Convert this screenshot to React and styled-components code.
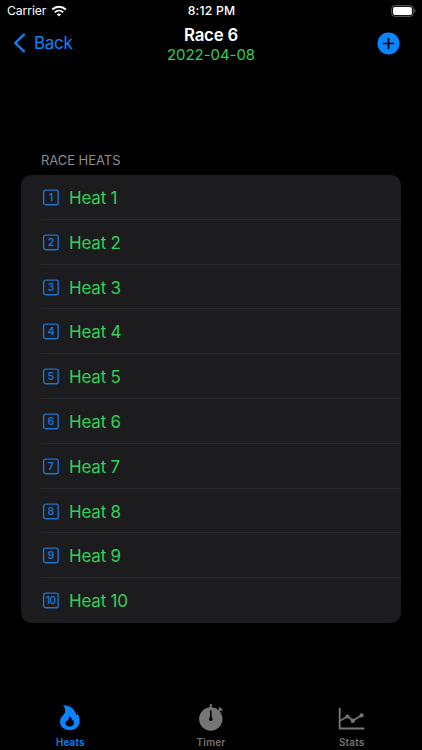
import React, { useState } from "react";
import styled, { createGlobalStyle, ThemeProvider } from "styled-components";

const theme = {
   color: {
      blue: "#0a84ff",
      badge: "#1b73cf",
      green: "#30d158",
      gray: "#8d8d93",
      tabGray: "#757575",
      card: "#1c1c1e",
      line: "#29292c",
   },
};

const GlobalStyle = createGlobalStyle`
   * {
      box-sizing: border-box;
   }

   body {
      margin: 0;
      background-color: #000;
      color: #fff;
      font-family: Inter, "Liberation Sans", sans-serif;
   }
`;

const Screen = styled.div`
   display: flex;
   flex-direction: column;
   width: 422px;
   height: 750px;
   overflow: hidden;
`;

const StatusBar = styled.div`
   display: grid;
   grid-template-columns: 1fr auto 1fr;
   align-items: center;
   height: 22px;
   padding: 0 6px 0 7px;
   font-size: 12.2px;
   line-height: 22px;
`;

const Carrier = styled.div`
   display: flex;
   align-items: center;
   gap: 5px;
   letter-spacing: -0.1px;
`;

const Time = styled.div`
   font-weight: 500;
   letter-spacing: 0.2px;
`;

const BatterySlot = styled.div`
   display: flex;
   justify-content: flex-end;
`;

const NavBar = styled.div`
   display: grid;
   grid-template-columns: 1fr auto 1fr;
   align-items: center;
   height: 43px;
   padding: 0 22px 0 13px;
`;

const BackButton = styled.button`
   display: flex;
   align-items: center;
   gap: 8px;
   padding: 0 0 2px;
   border: none;
   background: none;
   color: ${({ theme }) => theme.color.blue};
   font-family: inherit;
   font-size: 17px;
   letter-spacing: -0.3px;
`;

const Heading = styled.div`
   display: flex;
   flex-direction: column;
   align-items: center;
   padding: 1px 0 0 9px;
`;

const Title = styled.h1`
   margin: 0;
   font-size: 16.8px;
   font-weight: 600;
   line-height: 20px;
   letter-spacing: -0.2px;
`;

const RaceDate = styled.div`
   color: ${({ theme }) => theme.color.green};
   font-size: 15px;
   line-height: 19px;
   letter-spacing: -0.05px;
`;

const AddButton = styled.button`
   display: flex;
   justify-self: end;
   padding: 0;
   border: none;
   background: none;
   color: ${({ theme }) => theme.color.blue};
`;

const Content = styled.main`
   flex: 1;
   padding: 86px 21px 0;
`;

const SectionTitle = styled.h2`
   margin: 0 0 6px;
   padding-left: 20px;
   color: ${({ theme }) => theme.color.gray};
   font-size: 13px;
   font-weight: 400;
   line-height: 18px;
   letter-spacing: -0.05px;
`;

const HeatList = styled.ul`
   margin: 0;
   padding: 0 0 0 20px;
   width: 380px;
   border-radius: 10px;
   background-color: ${({ theme }) => theme.color.card};
   list-style: none;
   overflow: hidden;
`;

const HeatRow = styled.li`
   display: flex;
   align-items: center;
   gap: 9px;
   height: 44.8px;
   padding: 2.2px 0 0 1px;
   border-bottom: 1px solid ${({ theme }) => theme.color.line};

   &:last-child {
      border-bottom-color: transparent;
   }
`;

const NumberIcon = styled.svg`
   width: 18px;
   height: 18px;
   color: ${({ theme }) => theme.color.badge};
   font-size: ${({ $wide }) => ($wide ? "10px" : "10.5px")};
   font-weight: 600;
   letter-spacing: ${({ $wide }) => ($wide ? "-0.6px" : "0")};
`;

const HeatName = styled.span`
   color: ${({ theme }) => theme.color.green};
   font-size: 17px;
   line-height: 22px;
   letter-spacing: -0.2px;
`;

const TabBar = styled.nav`
   display: grid;
   grid-template-columns: repeat(3, 1fr);
   height: 48px;
`;

const Tab = styled.button`
   display: flex;
   flex-direction: column;
   align-items: center;
   padding: 0;
   border: none;
   background: none;
   color: ${({ theme, $active }) =>
      $active ? theme.color.blue : theme.color.tabGray};
   font-family: inherit;
   font-size: 9.8px;
   font-weight: 600;
   line-height: 12px;
   letter-spacing: 0.25px;
`;

const TabIcon = styled.svg`
   width: 30px;
   height: 32px;
   margin-bottom: 3px;
`;

const WifiIcon = () => (
   <svg width="16" height="12" viewBox="0 0 16 12" fill="none">
      <path d="M1.2 4.5C5.1.8 10.9.8 14.8 4.5" stroke="#fff" strokeWidth="2" />
      <path d="M3.8 7.3c2.5-2.3 5.9-2.3 8.4 0" stroke="#fff" strokeWidth="1.9" />
      <path d="M5.7 9.3c1.4-1.2 3.2-1.2 4.6 0L8 11.6z" fill="#fff" />
   </svg>
);

const BatteryIcon = () => (
   <svg width="25" height="12" viewBox="0 0 25 12">
      <rect x=".7" y=".7" width="21.6" height="10.6" rx="3" fill="none" stroke="#666" />
      <rect x="2.1" y="2.1" width="18.8" height="7.8" rx="1.7" fill="#fff" />
      <path d="M23.5 4.1c1.4.5 1.4 3.3 0 3.8z" fill="#777" />
   </svg>
);

const ChevronIcon = () => (
   <svg width="13" height="20" viewBox="0 0 13 20" fill="none">
      <path
         d="M11 1.6 2.2 10l8.8 8.4"
         stroke="currentColor"
         strokeWidth="2.3"
         strokeLinecap="round"
         strokeLinejoin="round"
      />
   </svg>
);

const PlusIcon = () => (
   <svg width="23" height="23" viewBox="0 0 23 23">
      <circle cx="11.5" cy="11.5" r="11" fill="currentColor" />
      <path
         d="M11.5 6.7v9.6M6.7 11.5h9.6"
         stroke="#000"
         strokeWidth="1.7"
         strokeLinecap="round"
      />
   </svg>
);

const HeatNumber = ({ value }) => (
   <NumberIcon viewBox="0 0 18 18" $wide={value > 9}>
      <rect
         x="1.6"
         y="1.1"
         width="14.6"
         height="14.6"
         rx="2"
         fill="none"
         stroke="currentColor"
         strokeWidth="1.4"
      />
      <text
         x={value > 9 ? 8.6 : 8.9}
         y="12.2"
         textAnchor="middle"
         fill="currentColor"
      >
         {value}
      </text>
   </NumberIcon>
);

const FlameIcon = () => (
   <TabIcon viewBox="0 0 30 32">
      <path
         fill="currentColor"
         fillRule="evenodd"
         d="M7.9 3.2C14.8 3 20.3 7 21.3 13.4c.6-.4.9-1 1-1.8 1.8 2.3 2.6 5.1 2.4 8C24.4 25 20.4 28.2 15 28.2 9.2 28.2 5 24.9 5 19.8c0-3 1.3-4.8 3.3-6.8C10.4 10.8 11.5 7.2 7.9 3.2ZM14 14.2c.7 2.4-1.1 3.5-1.7 5.2-.6-.2-.9-.6-1-1.2-1.8 3.3-.3 6.2 3.3 6.2 2.9 0 4.6-1.9 4.4-4.5-.1-.9-.4-1.6-.9-2.3-.1.6-.4 1-.8 1.2-.1-2-1.3-3.9-3.3-4.6Z"
      />
   </TabIcon>
);

const TimerIcon = () => (
   <TabIcon viewBox="0 0 30 32">
      <circle cx="14.8" cy="17" r="11.7" fill="currentColor" />
      <path
         d="M14.8 2.8v4M22.7 9.1l2-2M23.8 6.1l1.8 1.8"
         stroke="currentColor"
         strokeWidth="2"
         strokeLinecap="round"
      />
      <path
         d="M14.8 9v8.3"
         stroke="#000"
         strokeWidth="1.6"
         strokeLinecap="round"
      />
      <circle cx="14.8" cy="17" r="1.9" fill="#000" />
   </TabIcon>
);

const StatsIcon = () => (
   <TabIcon viewBox="0 0 30 32">
      <g
         fill="none"
         stroke="currentColor"
         strokeLinecap="round"
         strokeLinejoin="round"
      >
         <path d="M2.7 6.5v20h23.9" strokeWidth="1.9" />
         <path d="m3.5 18.4 6.9-4 5.6 4.1 8.5-5.1" strokeWidth="1.7" />
      </g>
      <g fill="currentColor">
         <circle cx="10.4" cy="14.4" r="2" />
         <circle cx="15.8" cy="18.7" r="2.2" />
         <circle cx="24.5" cy="13.4" r="2.1" />
      </g>
   </TabIcon>
);

const heats = Array.from({ length: 10 }, (_, index) => index + 1);

const tabs = [
   { name: "Heats", Icon: FlameIcon },
   { name: "Timer", Icon: TimerIcon },
   { name: "Stats", Icon: StatsIcon },
];

const App = () => {
   const [activeTab, setActiveTab] = useState("Heats");

   return (
      <ThemeProvider theme={theme}>
         <GlobalStyle />
         <Screen>
            <StatusBar>
               <Carrier>
                  Carrier
                  <WifiIcon />
               </Carrier>
               <Time>8:12 PM</Time>
               <BatterySlot>
                  <BatteryIcon />
               </BatterySlot>
            </StatusBar>

            <NavBar>
               <BackButton>
                  <ChevronIcon />
                  Back
               </BackButton>
               <Heading>
                  <Title>Race 6</Title>
                  <RaceDate>2022-04-08</RaceDate>
               </Heading>
               <AddButton aria-label="Add heat">
                  <PlusIcon />
               </AddButton>
            </NavBar>

            <Content>
               <SectionTitle>RACE HEATS</SectionTitle>
               <HeatList>
                  {heats.map((heat) => (
                     <HeatRow key={heat}>
                        <HeatNumber value={heat} />
                        <HeatName>Heat {heat}</HeatName>
                     </HeatRow>
                  ))}
               </HeatList>
            </Content>

            <TabBar>
               {tabs.map(({ name, Icon }) => (
                  <Tab
                     key={name}
                     $active={name === activeTab}
                     onClick={() => setActiveTab(name)}
                  >
                     <Icon />
                     {name}
                  </Tab>
               ))}
            </TabBar>
         </Screen>
      </ThemeProvider>
   );
};

export default App;
